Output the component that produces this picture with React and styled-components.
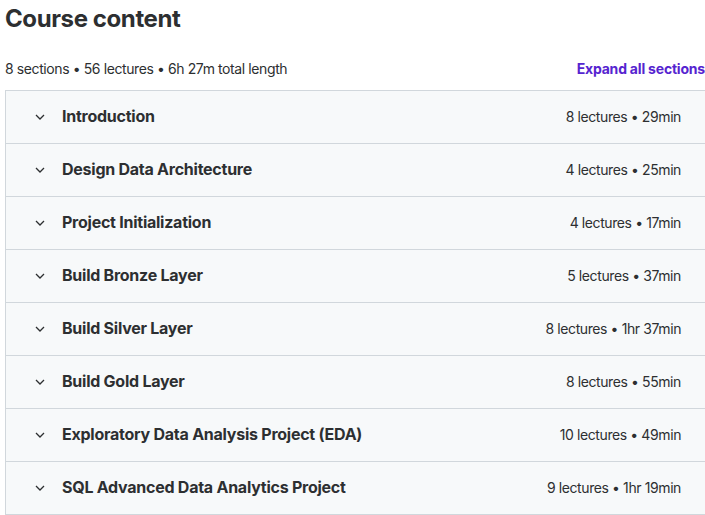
import React from "react";
import styled, { createGlobalStyle } from "styled-components";

const Global = createGlobalStyle`
  html, body { margin: 0; padding: 0; background: #fff; }
  body { font-family: Inter, "Noto Sans", sans-serif; color: #2d2f31; }
`;

const Page = styled.div`
  padding: 4px 0 0 5px;
  width: 700px;
`;

const Title = styled.h2`
  margin: 0;
  font-size: 24px;
  line-height: 29px;
  font-weight: 700;
  letter-spacing: -0.4px;
  color: #2d2f31;
`;

const Meta = styled.div`
  display: flex;
  align-items: center;
  justify-content: space-between;
  margin-top: 25px;
  margin-bottom: 12px;
  height: 20px;
  font-size: 14px;
  letter-spacing: -0.4px;
`;

const Summary = styled.span`
  color: #2d2f31;
`;

const ExpandLink = styled.button`
  border: 0;
  background: none;
  padding: 0;
  margin-top: 1px;
  font: inherit;
  font-weight: 700;
  letter-spacing: -0.2px;
  color: #5624d0;
  cursor: pointer;
`;

const List = styled.div`
  border: 1px solid #d1d7dc;
  border-bottom: 0;
  border-right: 0;
`;

const Row = styled.div`
  display: flex;
  align-items: center;
  height: 52px;
  padding: 0 24px 0 29px;
  background: #f7f9fa;
  border-bottom: 1px solid #d1d7dc;
`;

const Chevron = styled.svg`
  width: 10px;
  height: 6px;
  flex: none;
  margin-right: 17px;
  margin-top: -1px;
`;

const SectionTitle = styled.span`
  flex: 1;
  font-size: 16px;
  font-weight: 700;
  letter-spacing: -0.25px;
  color: #2d2f31;
  margin-top: -2px;
`;

const SectionInfo = styled.span`
  font-size: 14px;
  letter-spacing: -0.4px;
  color: #2d2f31;
  margin-top: -1px;
`;

const sections = [
  ["Introduction", "8 lectures • 29min"],
  ["Design Data Architecture", "4 lectures • 25min"],
  ["Project Initialization", "4 lectures • 17min"],
  ["Build Bronze Layer", "5 lectures • 37min"],
  ["Build Silver Layer", "8 lectures • 1hr 37min"],
  ["Build Gold Layer", "8 lectures • 55min"],
  ["Exploratory Data Analysis Project (EDA)", "10 lectures • 49min"],
  ["SQL Advanced Data Analytics Project", "9 lectures • 1hr 19min"],
];

export default function App() {
  return (
    <>
      <Global />
      <Page>
        <Title>Course content</Title>
        <Meta>
          <Summary>8 sections • 56 lectures • 6h 27m total length</Summary>
          <ExpandLink>Expand all sections</ExpandLink>
        </Meta>
        <List>
          {sections.map(([t, i]) => (
            <Row key={t}>
              <Chevron viewBox="0 0 10 6">
                <path d="M1 1l4 4 4-4" fill="none" stroke="#2d2f31" strokeWidth="1.3" />
              </Chevron>
              <SectionTitle>{t}</SectionTitle>
              <SectionInfo>{i}</SectionInfo>
            </Row>
          ))}
        </List>
      </Page>
    </>
  );
}
